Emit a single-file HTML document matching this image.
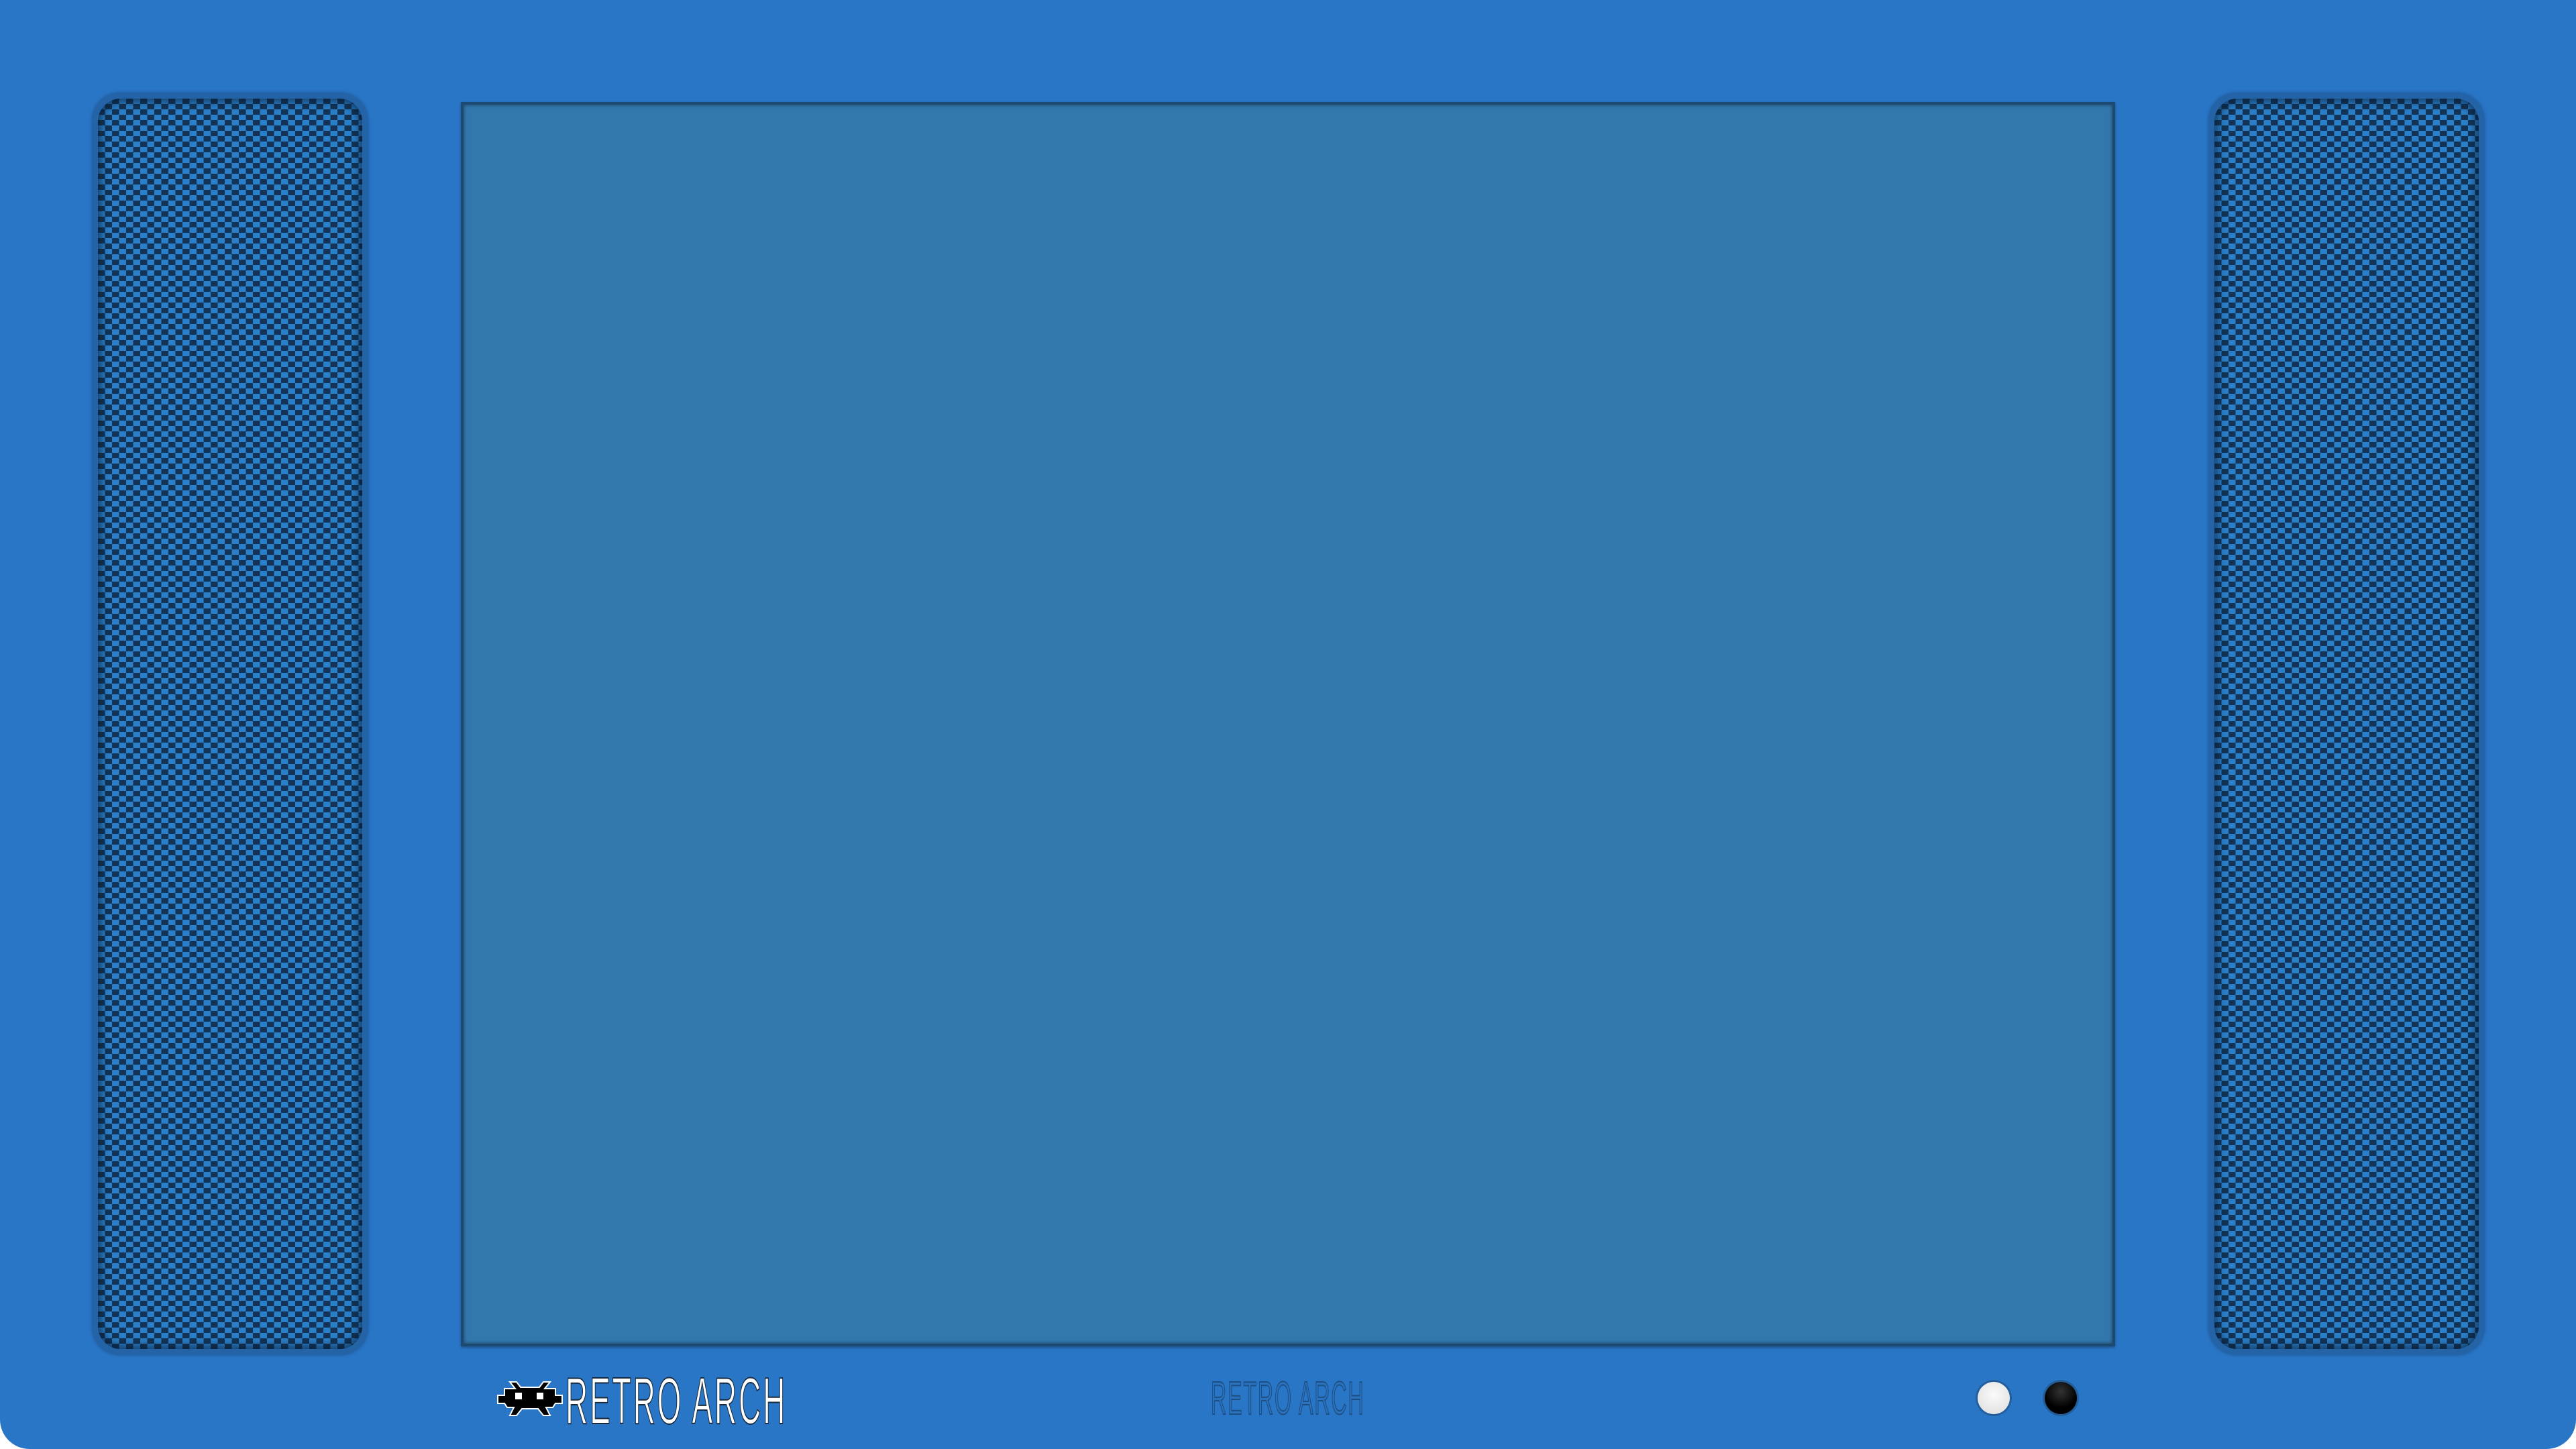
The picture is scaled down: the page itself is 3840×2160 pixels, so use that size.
<!DOCTYPE html>
<html><head><meta charset="utf-8"><style>
html,body{margin:0;padding:0;background:#fff;}
body{width:3840px;height:2160px;position:relative;overflow:hidden;font-family:"Liberation Sans",sans-serif;}
.body{position:absolute;left:0;top:0;width:3840px;height:2160px;background:#2a76c6;border-radius:0 0 44px 44px;}
.spk{position:absolute;top:139px;width:410px;height:1880px;border-radius:40px;background:#2363a6;box-shadow:0 0 6px rgba(10,40,80,.5);}
.grill{position:absolute;left:8px;top:8px;right:8px;bottom:8px;border-radius:34px;
background:repeating-conic-gradient(#2b7fc8 0 25%,#133456 0 50%) 0 0/21px 16px;
box-shadow:inset 0 0 14px 4px rgba(5,25,50,.7);}
.screen{position:absolute;left:687px;top:152px;width:2466px;height:1855px;background:#3378ad;box-sizing:border-box;border:4px solid #1d4a72;box-shadow:inset 0 0 6px rgba(0,0,0,.5),0 2px 4px rgba(0,0,0,.3);}
.logo{position:absolute;left:843px;top:2032px;font-size:98px;color:#fff;transform:scaleX(.47);transform-origin:left top;letter-spacing:6px;-webkit-text-stroke:2px #1a2a3a;white-space:nowrap;}
.logo2{position:absolute;left:1805px;top:2044px;font-size:70px;color:#2a72bd;transform:scaleX(.46);transform-origin:left top;letter-spacing:4px;-webkit-text-stroke:2px #1d4e82;white-space:nowrap;}
.btn{position:absolute;top:2060px;width:48px;height:48px;border-radius:50%;box-shadow:0 0 0 3px #245e9c;}
</style></head><body>
<div class="body">
<div class="spk" style="left:138px"><div class="grill"></div></div>
<div class="spk" style="left:3293px"><div class="grill"></div></div>
<div class="screen"></div>
<svg style="position:absolute;left:740px;top:2058px" width="100" height="54" viewBox="0 0 100 54">
<g fill="#000" stroke="#fff" stroke-width="2">
<path d="M20 2 L30 2 L36 10 L64 10 L70 2 L80 2 L72 12 L88 12 L88 22 L98 22 L98 34 L88 34 L84 40 L74 40 L80 52 L70 52 L62 42 L38 42 L30 52 L20 52 L26 40 L16 40 L12 34 L2 34 L2 22 L12 22 L12 12 L28 12 Z"/>
</g>
<rect x="28" y="18" width="10" height="10" fill="#fff"/><rect x="60" y="18" width="10" height="10" fill="#fff"/>
</svg>
<div class="logo">RETRO ARCH</div>
<div class="logo2">RETRO ARCH</div>
<div class="btn" style="left:2948px;background:radial-gradient(circle at 50% 40%,#fafafa,#dcdcdc)"></div>
<div class="btn" style="left:3048px;background:radial-gradient(circle at 50% 30%,#333,#000 60%)"></div>
</div>
</body></html>
